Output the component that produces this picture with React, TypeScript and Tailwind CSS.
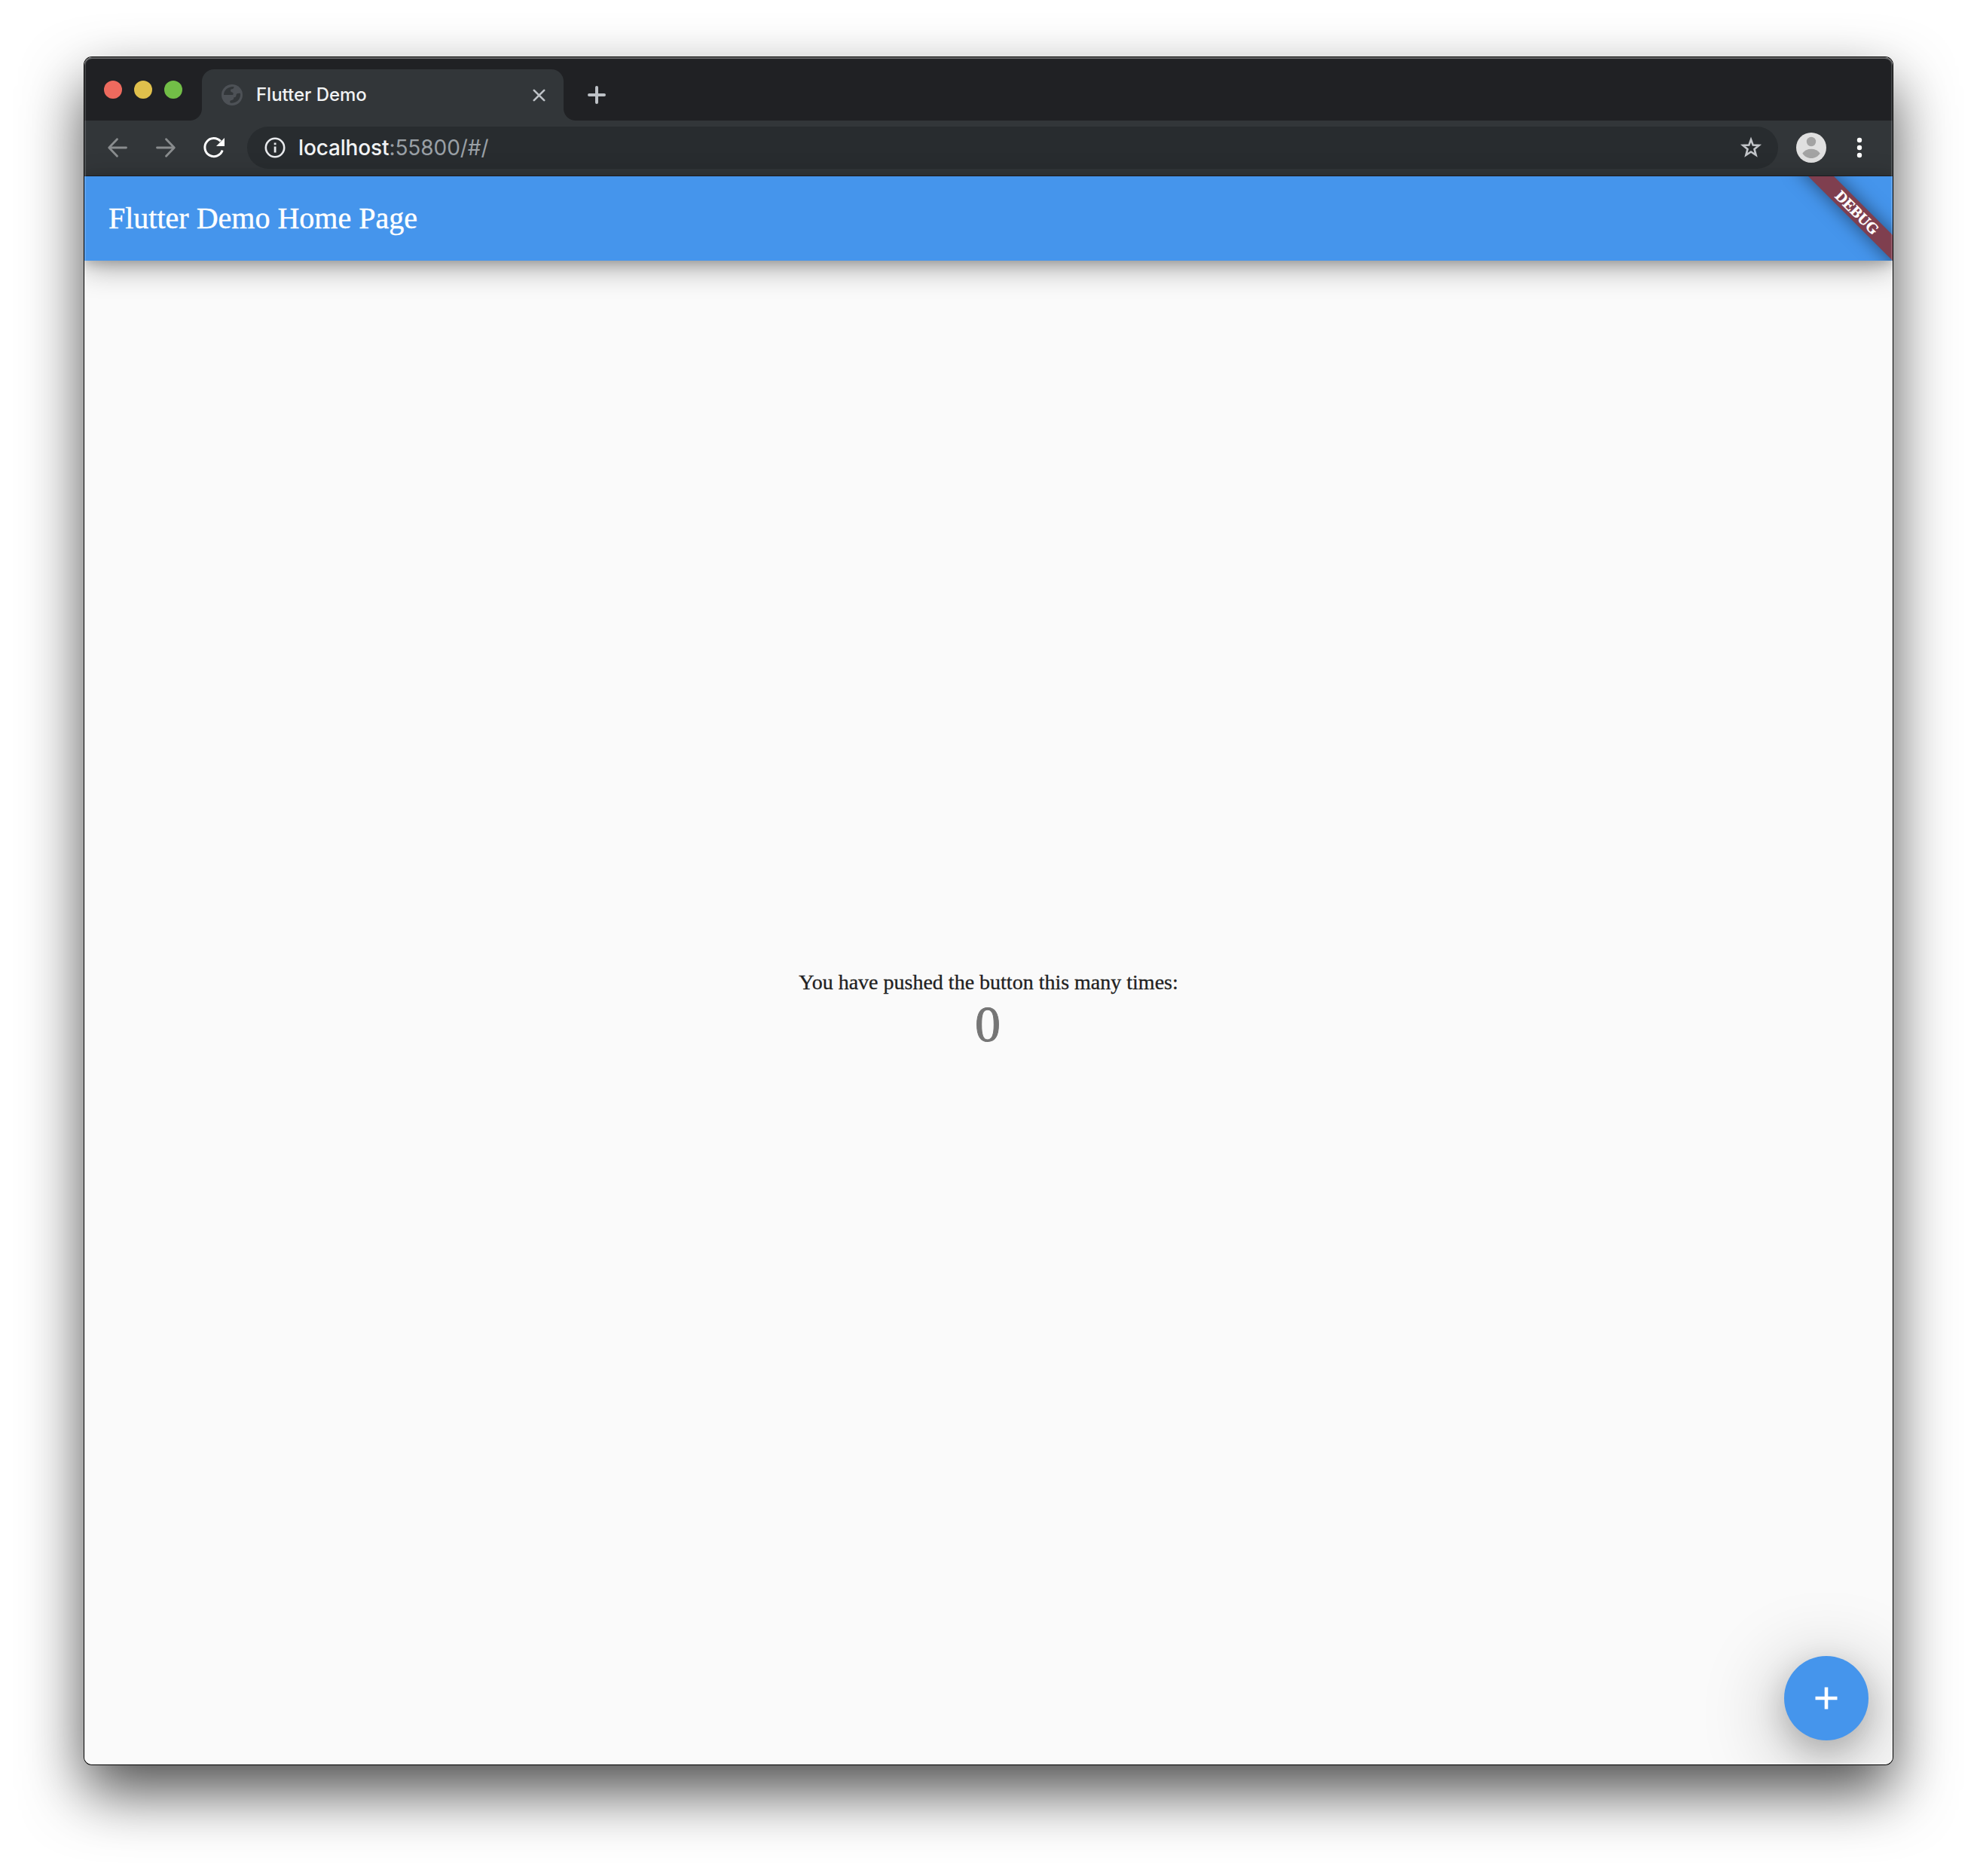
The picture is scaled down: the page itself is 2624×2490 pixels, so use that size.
import React from "react";

const sans = "font-['Inter','Liberation_Sans',sans-serif]";
const serif = "font-['Liberation_Serif',serif]";

function TabStrip() {
  return (
    <div className="flex h-[84px] bg-[#202124] pt-4">
      <div className="flex w-[156px] gap-4 pt-[15px] pl-[26px]">
        <span className="size-6 rounded-full bg-[#ed6a5e]" />
        <span className="size-6 rounded-full bg-[#e0c04c]" />
        <span className="size-6 rounded-full bg-[#72be47]" />
      </div>
      <div className="relative flex h-[68px] w-[480px] items-center rounded-t-2xl bg-[#323639] pl-[26px]">
        <span className="absolute bottom-0 -left-4 size-4 bg-[radial-gradient(circle_at_0_0,transparent_15.5px,#323639_16.5px)]" />
        <span className="absolute -right-4 bottom-0 size-4 bg-[radial-gradient(circle_at_100%_0,transparent_15.5px,#323639_16.5px)]" />
        <svg className="size-7" viewBox="0 0 28 28">
          <circle cx="14" cy="14" r="14" fill="#4d5156" />
          <path d="M3 14C3 8 8 2.800 16.500 3C16.500 5 15.500 6.500 12.500 6.500C11.500 8 12 10 14 10.500C16 11 16 13 15 14H3Z" fill="#323639" />
          <path d="M25 12C26 19 20.500 25.300 12 24.800C10.500 23 11 21.500 13.500 21C15.500 20.500 17 19.500 16 17.500C18 17.500 19.500 16.500 19.500 14.500C19.500 12.500 21 11.500 25 12Z" fill="#323639" />
        </svg>
        <span className={`${sans} ml-[18px] text-2xl font-[450] tracking-[-0.02px] text-[#f1f3f4]`}>Flutter Demo</span>
        <svg className="absolute top-[25.500px] left-[439px] size-[17px]" viewBox="0 0 17 17" stroke="#bdc1c6" strokeWidth="2.600" strokeLinecap="round">
          <path d="M1.800 1.800 15.200 15.200M15.200 1.800 1.800 15.200" />
        </svg>
      </div>
      <svg className="mt-[22px] ml-8 size-6" viewBox="0 0 24 24" stroke="#bdc1c6" strokeWidth="4" strokeLinecap="round">
        <path d="M12 2V22M2 12H22" />
      </svg>
    </div>
  );
}

function Toolbar() {
  return (
    <div className="flex h-[74px] items-center border-b border-[#202124] bg-[#323639] pl-[30px] pb-px">
      <svg className="size-7" viewBox="0 0 28 28" fill="none" stroke="#898c8e" strokeWidth="2.800" strokeLinecap="round" strokeLinejoin="round">
        <path d="M25.500 14H3M13.500 2.700 2.700 14 13.500 25.300" />
      </svg>
      <svg className="ml-9 size-7" viewBox="0 0 28 28" fill="none" stroke="#898c8e" strokeWidth="2.800" strokeLinecap="round" strokeLinejoin="round">
        <path d="M2.500 14H25M14.500 2.700 25.300 14 14.500 25.300" />
      </svg>
      <svg className="ml-[35px] size-[30px]" viewBox="0 0 30 30" fill="none">
        <path d="M26.200 18.500A12 12 0 1 1 23.800 6.600" stroke="#fff" strokeWidth="3" />
        <path d="M29 2V13H18Z" fill="#fff" />
      </svg>
      <div className={`${sans} ml-[29px] flex h-14 w-[2032px] items-center rounded-full bg-[#282c2f] pr-[21px] pl-[23px] text-[28px]`}>
        <svg className="size-7" viewBox="0 0 28 28" fill="#e8eaed">
          <circle cx="14" cy="14" r="12.200" fill="none" stroke="#e8eaed" strokeWidth="2.600" />
          <path d="M12.700 7.500h2.800v2.800h-2.800zM12.700 12.500h2.800v8h-2.800z" />
        </svg>
        <span className="ml-[17px] font-[450] tracking-[-0.15px] text-[#f1f3f4]">localhost</span>
        <span className="tracking-[-0.05px] text-[#9aa0a6]">:55800/#/</span>
        <svg className="ml-auto size-[30px]" viewBox="0 0 30 30" fill="none" stroke="#c3c6ca" strokeWidth="2.600">
          <path d="M15 4.200 17.700 11.600 25.600 12 19.500 16.900 21.600 24.800 15 20.500 8.400 24.800 10.500 16.900 4.400 12 12.300 11.600Z" />
        </svg>
      </div>
      <svg className="ml-6 size-10" viewBox="0 0 40 40">
        <circle cx="20" cy="20" r="20" fill="#e0e0e0" />
        <circle cx="20" cy="12" r="6.200" fill="#a3a3a3" />
        <path d="M8.300 27.500C11 23.700 15 21.700 20 21.700S29 23.700 31.700 27.500C29 31.800 25 34 20 34S11 31.800 8.300 27.500Z" fill="#a3a3a3" />
      </svg>
      <svg className="ml-10 h-7 w-2" viewBox="0 0 8 28" fill="#fff">
        <circle cx="4" cy="4" r="3.200" />
        <circle cx="4" cy="14" r="3.200" />
        <circle cx="4" cy="24" r="3.200" />
      </svg>
    </div>
  );
}

function AppBar() {
  return (
    <header className="relative z-10 flex h-28 items-center bg-[#4595ec] pl-8 shadow-[0_4px_14px_rgba(0,0,0,0.18),0_10px_36px_rgba(0,0,0,0.32)]">
      <h1 className={`${serif} text-[40px] leading-none whitespace-nowrap text-white [-webkit-text-stroke:0.4px_white]`}>Flutter Demo Home Page</h1>
      <div className="absolute top-0 right-0 h-28 w-44 overflow-hidden">
        <div className={`${serif} absolute top-[35.500px] -right-[52.500px] flex h-6 w-[200px] rotate-45 items-center justify-center bg-[#7f3f4f] text-[20.400px] leading-none font-bold text-white shadow-[0_0_24px_rgba(0,0,0,0.5)] [-webkit-text-stroke:0.4px_white]`}>
          DEBUG
        </div>
      </div>
    </header>
  );
}

export default function App() {
  return (
    <div className="h-[2490px] w-[2624px] overflow-hidden bg-white px-28 pt-[76px]">
      <div className="relative h-[2266px] w-[2400px] rounded-[10px] shadow-[0_0_0_1px_#000,0_36px_80px_rgba(0,0,0,0.7)]">
        <div className="flex h-full flex-col overflow-hidden rounded-[10px] bg-[#fafafa]">
          <TabStrip />
          <Toolbar />
          <AppBar />
          <main className={`${serif} relative flex flex-1 flex-col items-center justify-center pb-[3px]`}>
            <p className="text-[28px] leading-8 text-[#212121] [-webkit-text-stroke:0.3px_#212121]">You have pushed the button this many times:</p>
            <p className="mr-0.5 text-[68px] leading-[78px] text-[#757575] [-webkit-text-stroke:1px_#757575]">0</p>
            <button className="absolute right-8 bottom-8 flex size-28 items-center justify-center rounded-full bg-[#4595ec] shadow-[0_14px_40px_rgba(0,0,0,0.2),0_20px_100px_14px_rgba(0,0,0,0.22)]">
              <svg className="size-[30px]" viewBox="0 0 30 30" fill="#fff">
                <path d="M12.700 0.500h4.600v12.200h12.200v4.600H17.300v12.200h-4.600V17.300H0.500v-4.600h12.200z" />
              </svg>
            </button>
          </main>
        </div>
        <div className="pointer-events-none absolute inset-0 z-20 rounded-[10px] shadow-[inset_0_2px_0_rgba(255,255,255,0.200),inset_0_0_0_2px_rgba(255,255,255,0.150)]" />
      </div>
    </div>
  );
}
